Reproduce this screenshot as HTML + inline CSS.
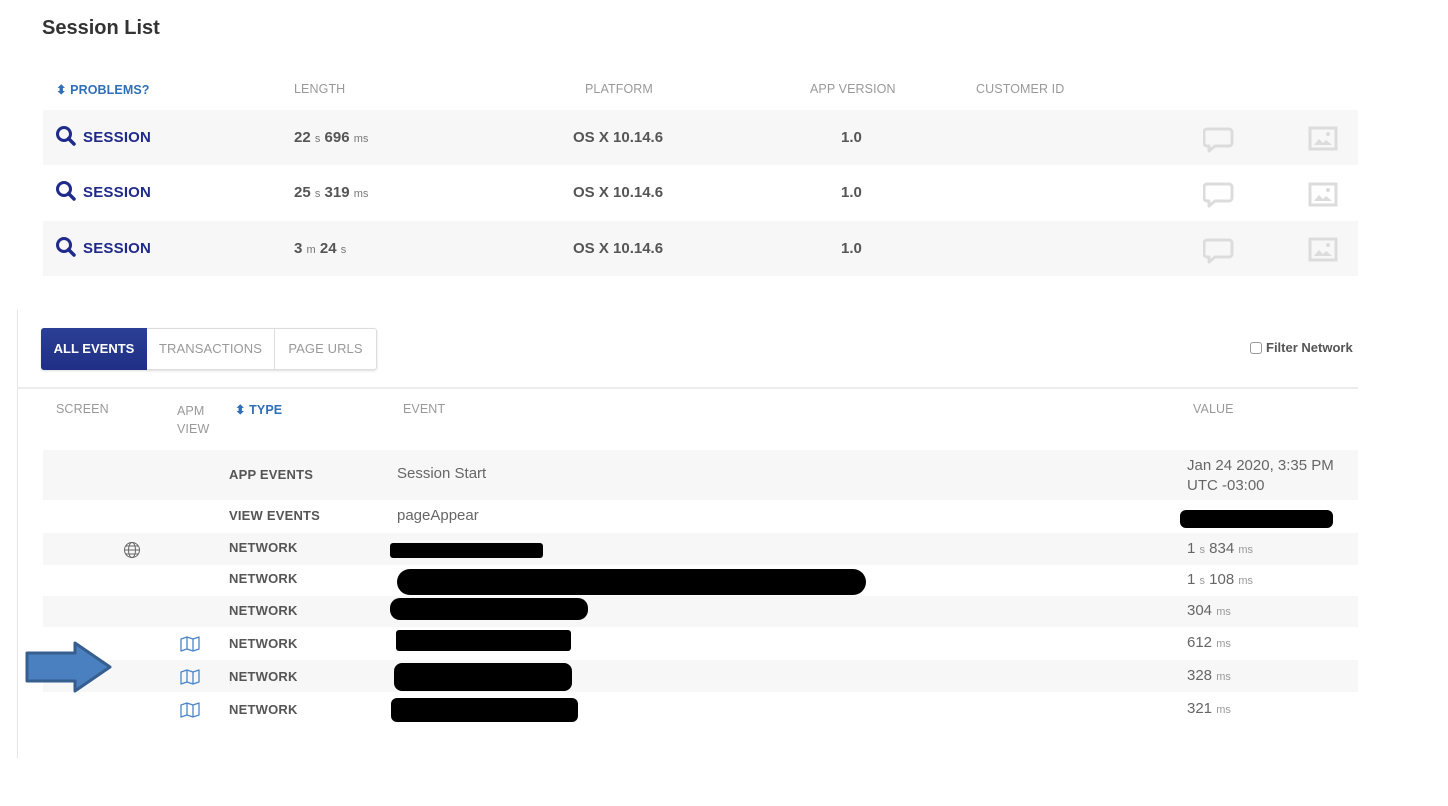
<!DOCTYPE html>
<html><head><meta charset="utf-8"><style>
*{margin:0;padding:0;box-sizing:border-box}
body{width:1448px;height:806px;background:#fff;font-family:"Liberation Sans",sans-serif;position:relative;overflow:hidden;color:#555}
.a{position:absolute;white-space:nowrap}
.h{font-size:12.5px;color:#999;letter-spacing:.1px}
.blue{color:#2f6fb8}
.row{position:absolute;background:#f7f7f7}
.sess{font-size:15px;font-weight:bold;color:#1f2a8a;letter-spacing:.2px}
.v{font-size:15px;color:#555;font-weight:bold}
.sm{font-size:11px;font-weight:normal;color:#777}
.t{font-size:13px;font-weight:bold;color:#555;letter-spacing:.2px}
.ev{font-size:15px;color:#666}
.val{font-size:15px;color:#666}
.val .sm{font-size:11px;color:#999}
.blk{position:absolute;background:#000;border-radius:8px}
</style></head><body>
<div class="a" style="left:42px;top:17px;font-size:20px;font-weight:bold;color:#333">Session List</div>

<div class="a h blue" style="left:56px;top:82px;font-weight:bold">⬍ PROBLEMS?</div>
<div class="a h" style="left:294px;top:82px">LENGTH</div>
<div class="a h" style="left:585px;top:82px">PLATFORM</div>
<div class="a h" style="left:810px;top:82px">APP VERSION</div>
<div class="a h" style="left:976px;top:82px">CUSTOMER ID</div>

<div class="row" style="left:43px;top:110px;width:1315px;height:55px"></div>
<div class="row" style="left:43px;top:221px;width:1315px;height:55px"></div>

<svg class="a" style="left:55px;top:125px" width="22" height="22" viewBox="0 0 22 22"><circle cx="9" cy="9" r="6.5" fill="none" stroke="#1f2a8a" stroke-width="3"/><line x1="13.5" y1="13.5" x2="19" y2="19" stroke="#1f2a8a" stroke-width="3.5" stroke-linecap="round"/></svg>
<div class="a sess" style="left:83px;top:129px">SESSION</div>
<div class="a v" style="left:294px;top:129px">22 <span class="sm">s</span> 696 <span class="sm">ms</span></div>
<div class="a v" style="left:573px;top:129px">OS X 10.14.6</div>
<div class="a v" style="left:841px;top:129px">1.0</div>

<svg class="a" style="left:55px;top:180px" width="22" height="22" viewBox="0 0 22 22"><circle cx="9" cy="9" r="6.5" fill="none" stroke="#1f2a8a" stroke-width="3"/><line x1="13.5" y1="13.5" x2="19" y2="19" stroke="#1f2a8a" stroke-width="3.5" stroke-linecap="round"/></svg>
<div class="a sess" style="left:83px;top:184px">SESSION</div>
<div class="a v" style="left:294px;top:184px">25 <span class="sm">s</span> 319 <span class="sm">ms</span></div>
<div class="a v" style="left:573px;top:184px">OS X 10.14.6</div>
<div class="a v" style="left:841px;top:184px">1.0</div>

<svg class="a" style="left:55px;top:236px" width="22" height="22" viewBox="0 0 22 22"><circle cx="9" cy="9" r="6.5" fill="none" stroke="#1f2a8a" stroke-width="3"/><line x1="13.5" y1="13.5" x2="19" y2="19" stroke="#1f2a8a" stroke-width="3.5" stroke-linecap="round"/></svg>
<div class="a sess" style="left:83px;top:240px">SESSION</div>
<div class="a v" style="left:294px;top:240px">3 <span class="sm">m</span> 24 <span class="sm">s</span></div>
<div class="a v" style="left:573px;top:240px">OS X 10.14.6</div>
<div class="a v" style="left:841px;top:240px">1.0</div>

<svg class="a" style="left:1203px;top:127px" width="32" height="145" viewBox="0 0 32 145">
<g fill="none" stroke="#dcdcdc" stroke-width="3" stroke-linejoin="round">
<path d="M4 2h22a3 3 0 0 1 3 3v11a3 3 0 0 1-3 3H12l-6 5v-5H4a3 3 0 0 1-3-3V5a3 3 0 0 1 3-3z"/>
<path d="M4 57h22a3 3 0 0 1 3 3v11a3 3 0 0 1-3 3H12l-6 5v-5H4a3 3 0 0 1-3-3V60a3 3 0 0 1 3-3z"/>
<path d="M4 113h22a3 3 0 0 1 3 3v11a3 3 0 0 1-3 3H12l-6 5v-5H4a3 3 0 0 1-3-3v-11a3 3 0 0 1 3-3z"/>
</g></svg>
<svg class="a" style="left:1308px;top:126px" width="30" height="140" viewBox="0 0 30 140">
<g fill="none" stroke="#dcdcdc" stroke-width="3"><rect x="2" y="2" width="26" height="21"/><rect x="2" y="58" width="26" height="21"/><rect x="2" y="113" width="26" height="21"/></g>
<g fill="#dcdcdc"><path d="M6 19l5-6 4 4 3-3 6 5z"/><circle cx="20" cy="8" r="2"/><path d="M6 75l5-6 4 4 3-3 6 5z"/><circle cx="20" cy="64" r="2"/><path d="M6 130l5-6 4 4 3-3 6 5z"/><circle cx="20" cy="119" r="2"/></g></svg>

<div class="a" style="left:17px;top:310px;width:1px;height:448px;background:#e5e5e5"></div>
<div class="a" style="left:17px;top:387px;width:1341px;height:2px;background:#ececec"></div>

<div class="a" style="left:41px;top:328px;width:336px;height:42px;border:1px solid #ddd;border-radius:3px;box-shadow:0 1px 2px #ddd"></div>
<div class="a" style="left:41px;top:328px;width:106px;height:42px;background:linear-gradient(#2a3f95,#1f2f85);border-radius:3px 0 0 3px;color:#fff;font-size:13px;font-weight:bold;text-align:center;line-height:42px">ALL EVENTS</div>
<div class="a" style="left:147px;top:328px;width:128px;height:42px;font-size:13px;color:#999;text-align:center;line-height:42px;border-right:1px solid #ddd;letter-spacing:.1px">TRANSACTIONS</div>
<div class="a" style="left:275px;top:328px;width:101px;height:42px;font-size:13px;color:#999;text-align:center;line-height:42px;letter-spacing:.1px">PAGE URLS</div>

<div class="a" style="left:1250px;top:342px;width:12px;height:12px;border:1px solid #999;border-radius:3px"></div>
<div class="a" style="left:1266px;top:340px;font-size:13px;font-weight:bold;color:#555">Filter Network</div>

<div class="a h" style="left:56px;top:402px">SCREEN</div>
<div class="a h" style="left:177px;top:402px;line-height:18px">APM<br>VIEW</div>
<div class="a h blue" style="left:235px;top:402px;font-weight:bold">⬍ TYPE</div>
<div class="a h" style="left:403px;top:402px">EVENT</div>
<div class="a h" style="left:1193px;top:402px">VALUE</div>

<div class="row" style="left:43px;top:450px;width:1315px;height:50px"></div>
<div class="row" style="left:43px;top:533px;width:1315px;height:32px"></div>
<div class="row" style="left:43px;top:596px;width:1315px;height:31px"></div>
<div class="row" style="left:43px;top:660px;width:1315px;height:32px"></div>

<div class="a t" style="left:229px;top:467px">APP EVENTS</div>
<div class="a ev" style="left:397px;top:465px">Session Start</div>
<div class="a val" style="left:1187px;top:456px;line-height:20px">Jan 24 2020, 3:35 PM<br>UTC -03:00</div>

<div class="a t" style="left:229px;top:508px">VIEW EVENTS</div>
<div class="a ev" style="left:397px;top:507px">pageAppear</div>

<svg class="a" style="left:123px;top:541px" width="18" height="18" viewBox="0 0 18 18"><g fill="none" stroke="#666" stroke-width="1"><circle cx="9" cy="9" r="7.5"/><ellipse cx="9" cy="9" rx="3.5" ry="7.5"/><line x1="1.5" y1="9" x2="16.5" y2="9"/><path d="M3 5h12M3 13h12"/></g></svg>
<div class="a t" style="left:229px;top:540px">NETWORK</div>
<div class="a val" style="left:1187px;top:540px">1 <span class="sm">s</span> 834 <span class="sm">ms</span></div>
<div class="a t" style="left:229px;top:571px">NETWORK</div>
<div class="a val" style="left:1187px;top:571px">1 <span class="sm">s</span> 108 <span class="sm">ms</span></div>
<div class="a t" style="left:229px;top:603px">NETWORK</div>
<div class="a val" style="left:1187px;top:602px">304 <span class="sm">ms</span></div>

<svg class="a" style="left:180px;top:636px" width="20" height="90" viewBox="0 0 20 90"><g fill="none" stroke="#4a86c8" stroke-width="1.3" stroke-linejoin="round">
<path d="M1 3l6-2 6 2 6-2v12l-6 2-6-2-6 2z M7 1v12 M13 3v12"/>
<path d="M1 36l6-2 6 2 6-2v12l-6 2-6-2-6 2z M7 34v12 M13 36v12"/>
<path d="M1 69l6-2 6 2 6-2v12l-6 2-6-2-6 2z M7 67v12 M13 69v12"/></g></svg>
<div class="a t" style="left:229px;top:636px">NETWORK</div>
<div class="a val" style="left:1187px;top:634px">612 <span class="sm">ms</span></div>
<div class="a t" style="left:229px;top:669px">NETWORK</div>
<div class="a val" style="left:1187px;top:667px">328 <span class="sm">ms</span></div>
<div class="a t" style="left:229px;top:702px">NETWORK</div>
<div class="a val" style="left:1187px;top:700px">321 <span class="sm">ms</span></div>

<div class="blk" style="left:390px;top:543px;width:153px;height:15px;border-radius:3px"></div>
<div class="blk" style="left:397px;top:569px;width:469px;height:26px;border-radius:13px"></div>
<div class="blk" style="left:390px;top:598px;width:198px;height:22px;border-radius:10px"></div>
<div class="blk" style="left:396px;top:630px;width:175px;height:21px;border-radius:3px"></div>
<div class="blk" style="left:394px;top:663px;width:178px;height:28px;border-radius:8px"></div>
<div class="blk" style="left:391px;top:698px;width:187px;height:24px;border-radius:6px"></div>
<div class="blk" style="left:1180px;top:510px;width:153px;height:18px;border-radius:6px"></div>

<svg class="a" style="left:24px;top:640px" width="90" height="54" viewBox="0 0 90 54"><path d="M3 13h48V3l35 24-35 24V41H3z" fill="#4a7fc0" stroke="#365f8f" stroke-width="3" stroke-linejoin="round"/></svg>
</body></html>
